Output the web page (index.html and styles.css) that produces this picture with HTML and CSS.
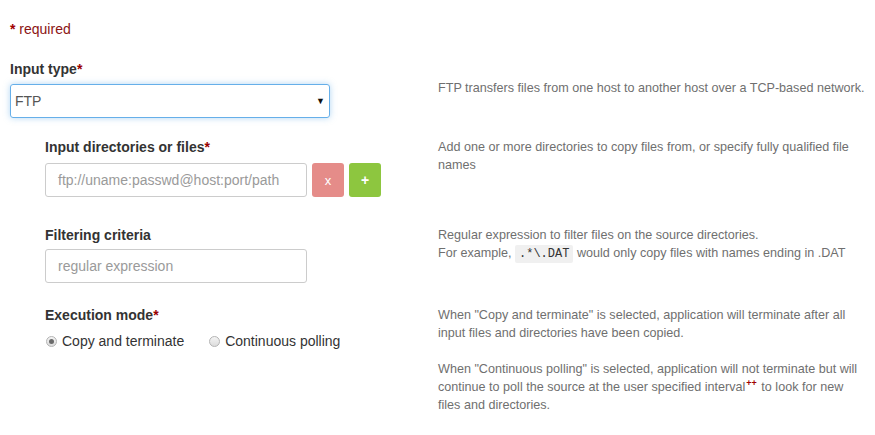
FILE: index.html
```html
<!DOCTYPE html>
<html>
<head>
<meta charset="utf-8">
<link rel="stylesheet" href="styles.css">
</head>
<body>
<div class="page">
  <div class="required"><span class="star">*</span> required</div>

  <div class="row row-type">
    <div class="left">
      <div class="label">Input type<span class="req">*</span></div>
      <div class="select"><span>FTP</span><span class="caret">▼</span></div>
    </div>
    <div class="help help-type">FTP transfers files from one host to another host over a TCP-based network.</div>
  </div>

  <div class="row row-dirs">
    <div class="left nested">
      <div class="label">Input directories or files<span class="req">*</span></div>
      <div class="input-group">
        <div class="input"><span class="ph">ftp://uname:passwd@host:port/path</span></div>
        <div class="btn btn-del">x</div>
        <div class="btn btn-add">+</div>
      </div>
    </div>
    <div class="help help-dirs">Add one or more directories to copy files from, or specify fully qualified file names</div>
  </div>

  <div class="row row-filter">
    <div class="left nested">
      <div class="label">Filtering criteria</div>
      <div class="input-group">
        <div class="input"><span class="ph">regular expression</span></div>
      </div>
    </div>
    <div class="help help-filter">Regular expression to filter files on the source directories.<br>For example, <code>.*\.DAT</code> would only copy files with names ending in .DAT</div>
  </div>

  <div class="row row-exec">
    <div class="left nested">
      <div class="label">Execution mode<span class="req">*</span></div>
      <div class="radios">
        <span class="radio checked"></span><span class="radio-text">Copy and terminate</span>
        <span class="radio"></span><span class="radio-text">Continuous polling</span>
      </div>
    </div>
    <div class="help help-exec">
      <p>When "Copy and terminate" is selected, application will terminate after all input files and directories have been copied.</p>
      <p>When "Continuous polling" is selected, application will not terminate but will continue to poll the source at the user specified interval<sup>++</sup> to look for new files and directories.</p>
    </div>
  </div>
</div>
</body>
</html>
```

FILE: styles.css
```css
html, body {
  margin: 0;
  padding: 0;
  background: #fff;
}
body {
  font-family: "Liberation Sans", Arial, sans-serif;
  font-size: 14px;
  color: #333;
}
.page {
  padding: 19px 0 0 10px;
}
.required {
  line-height: 20px;
  color: #8b1414;
}
.star {
  color: #a00000;
  font-weight: bold;
}
.row {
  display: flex;
}
.left {
  width: 428px;
  flex: none;
  box-sizing: border-box;
}
.left.nested {
  padding-left: 35px;
}
.label {
  font-weight: bold;
  line-height: 20px;
  color: #333;
}
.req {
  color: #990000;
}
.help {
  width: 432px;
  font-size: 12.6px;
  line-height: 18px;
  color: #6f6f6f;
}
.help p {
  margin: 0;
}
.help p + p {
  margin-top: 18px;
}
.row-type {
  margin-top: 20px;
}
.select {
  margin-top: 5px;
  width: 320px;
  height: 34px;
  box-sizing: border-box;
  border: 1px solid #66afe9;
  border-radius: 3px;
  box-shadow: 0 0 6px rgba(102, 175, 233, 0.5);
  display: flex;
  align-items: center;
  justify-content: space-between;
  padding: 0 4px 0 4px;
  color: #555;
}
.caret {
  font-size: 9px;
  color: #111;
}
.help-type {
  padding-top: 20px;
}
.row-dirs {
  margin-top: 19px;
}
.input-group {
  display: flex;
  margin-top: 6px;
}
.input {
  width: 262px;
  height: 34px;
  box-sizing: border-box;
  border: 1px solid #ccc;
  border-radius: 3px;
  display: flex;
  align-items: center;
  padding-left: 12px;
}
.ph {
  color: #9a9a9a;
}
.btn {
  width: 32px;
  height: 34px;
  box-sizing: border-box;
  border-radius: 3px;
  display: flex;
  align-items: center;
  justify-content: center;
  color: #fff;
  font-size: 13px;
}
.btn-del {
  background: #e58c89;
  margin-left: 5px;
}
.btn-add {
  background: #8dc63f;
  margin-left: 5px;
  font-size: 14px;
  font-weight: bold;
}
.help-dirs {
  padding-top: 1px;
}
.row-filter {
  margin-top: 28px;
}
.row-filter .input-group {
  margin-top: 4px;
}
.help-filter {
  padding-top: 1px;
}
.help code {
  font-family: "Liberation Mono", "DejaVu Sans Mono", monospace;
  font-size: 12px;
  background: #f0f0f0;
  color: #333;
  padding: 2px 4px;
  border-radius: 2px;
}
.row-exec {
  margin-top: 22px;
}
.radios {
  display: flex;
  align-items: center;
  margin-top: 6px;
  line-height: 20px;
}
.radio {
  width: 11px;
  height: 11px;
  border-radius: 50%;
  border: 1px solid #b4b4b4;
  background: linear-gradient(#f4f4f4, #dcdcdc);
  box-sizing: border-box;
  position: relative;
  margin-left: 1px;
  margin-right: 5px;
  flex: none;
}
.radio.checked::after {
  content: "";
  position: absolute;
  left: 2px;
  top: 2px;
  width: 5px;
  height: 5px;
  border-radius: 50%;
  background: #6a6a6a;
}
.radio-text {
  margin-right: 24px;
}
.help-exec {
  width: 424px;
  padding-top: 1px;
}
.help sup {
  color: #a00000;
  font-weight: bold;
  font-size: 9px;
  line-height: 0;
  margin: 0 1px;
}
```
